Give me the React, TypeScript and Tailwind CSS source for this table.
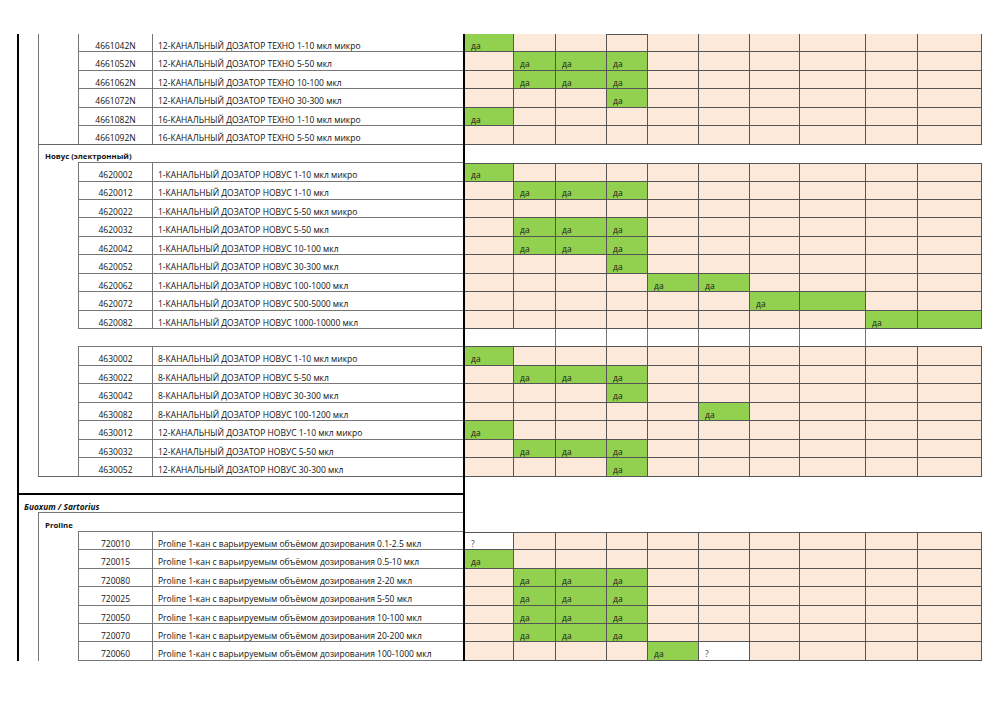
import React from "react";

type Row =
  | { t: "item"; code: string; name: string; d: string; b38?: boolean; topB?: boolean; first?: boolean }
  | { t: "head"; text: string }
  | { t: "brand"; text: string }
  | { t: "gap" }
  | { t: "sep" };

const COLW = [
  "w-[49px]",
  "w-[42px]",
  "w-[51px]",
  "w-[41px]",
  "w-[51px]",
  "w-[51px]",
  "w-[50px]",
  "w-[66px]",
  "w-[52px]",
  "w-[64px]",
];

const rows: Row[] = [
  { t: "item", code: "4661042N", name: "12-КАНАЛЬНЫЙ ДОЗАТОР ТЕХНО 1-10 мкл микро", d: "g.........", first: true },
  { t: "item", code: "4661052N", name: "12-КАНАЛЬНЫЙ ДОЗАТОР ТЕХНО 5-50 мкл", d: ".ggg......" },
  { t: "item", code: "4661062N", name: "12-КАНАЛЬНЫЙ ДОЗАТОР ТЕХНО 10-100 мкл", d: ".ggg......" },
  { t: "item", code: "4661072N", name: "12-КАНАЛЬНЫЙ ДОЗАТОР ТЕХНО 30-300 мкл", d: "...g......" },
  { t: "item", code: "4661082N", name: "16-КАНАЛЬНЫЙ ДОЗАТОР ТЕХНО 1-10 мкл микро", d: "g........." },
  { t: "item", code: "4661092N", name: "16-КАНАЛЬНЫЙ ДОЗАТОР ТЕХНО 5-50 мкл микро", d: "..........", b38: true },
  { t: "head", text: "Новус (электронный)" },
  { t: "item", code: "4620002", name: "1-КАНАЛЬНЫЙ ДОЗАТОР НОВУС 1-10 мкл микро", d: "g.........", topB: true },
  { t: "item", code: "4620012", name: "1-КАНАЛЬНЫЙ ДОЗАТОР НОВУС 1-10 мкл", d: ".ggg......" },
  { t: "item", code: "4620022", name: "1-КАНАЛЬНЫЙ ДОЗАТОР НОВУС 5-50 мкл микро", d: ".........." },
  { t: "item", code: "4620032", name: "1-КАНАЛЬНЫЙ ДОЗАТОР НОВУС 5-50 мкл", d: ".ggg......" },
  { t: "item", code: "4620042", name: "1-КАНАЛЬНЫЙ ДОЗАТОР НОВУС 10-100 мкл", d: ".ggg......" },
  { t: "item", code: "4620052", name: "1-КАНАЛЬНЫЙ ДОЗАТОР НОВУС 30-300 мкл", d: "...g......" },
  { t: "item", code: "4620062", name: "1-КАНАЛЬНЫЙ ДОЗАТОР НОВУС 100-1000 мкл", d: "....gg...." },
  { t: "item", code: "4620072", name: "1-КАНАЛЬНЫЙ ДОЗАТОР НОВУС 500-5000 мкл", d: "......gG.." },
  { t: "item", code: "4620082", name: "1-КАНАЛЬНЫЙ ДОЗАТОР НОВУС 1000-10000 мкл", d: "........gG" },
  { t: "gap" },
  { t: "item", code: "4630002", name: "8-КАНАЛЬНЫЙ ДОЗАТОР НОВУС 1-10 мкл микро", d: "g........." },
  { t: "item", code: "4630022", name: "8-КАНАЛЬНЫЙ ДОЗАТОР НОВУС 5-50 мкл", d: ".ggg......" },
  { t: "item", code: "4630042", name: "8-КАНАЛЬНЫЙ ДОЗАТОР НОВУС 30-300 мкл", d: "...g......" },
  { t: "item", code: "4630082", name: "8-КАНАЛЬНЫЙ ДОЗАТОР НОВУС 100-1200 мкл", d: ".....g...." },
  { t: "item", code: "4630012", name: "12-КАНАЛЬНЫЙ ДОЗАТОР НОВУС 1-10 мкл микро", d: "g........." },
  { t: "item", code: "4630032", name: "12-КАНАЛЬНЫЙ ДОЗАТОР НОВУС 5-50 мкл", d: ".ggg......" },
  { t: "item", code: "4630052", name: "12-КАНАЛЬНЫЙ ДОЗАТОР НОВУС 30-300 мкл", d: "...g......", b38: true },
  { t: "sep" },
  { t: "brand", text: "Биохит / Sartorius" },
  { t: "head", text: "Proline" },
  { t: "item", code: "720010", name: "Proline 1-кан с варьируемым объёмом дозирования 0.1-2.5 мкл", d: "?.........", topB: true },
  { t: "item", code: "720015", name: "Proline 1-кан с варьируемым объёмом дозирования 0.5-10 мкл", d: "g........." },
  { t: "item", code: "720080", name: "Proline 1-кан с варьируемым объёмом дозирования 2-20 мкл", d: ".ggg......" },
  { t: "item", code: "720025", name: "Proline 1-кан с варьируемым объёмом дозирования 5-50 мкл", d: ".ggg......" },
  { t: "item", code: "720050", name: "Proline 1-кан с варьируемым объёмом дозирования 10-100 мкл", d: ".ggg......" },
  { t: "item", code: "720070", name: "Proline 1-кан с варьируемым объёмом дозирования 20-200 мкл", d: ".ggg......" },
  { t: "item", code: "720060", name: "Proline 1-кан с варьируемым объёмом дозирования 100-1000 мкл", d: "....g?...." },
];

function DataCells({ d, topB, first }: { d: string; topB?: boolean; first?: boolean }) {
  return (
    <div className="flex h-full border-l-2 border-black">
      {d.split("").map((c, i) => {
        const bg =
          c === "g" || c === "G" ? "bg-[#92d050]" : c === "?" ? "bg-white" : "bg-[#fde9d9]";
        const top = topB || (first && i === 3) ? "border-t border-t-[#555]" : "";
        return (
          <div
            key={i}
            className={`${COLW[i]} ${bg} ${top} h-full border-r border-b border-[#555] flex items-end pl-[6px] pb-[1px] text-[8.5px] leading-none text-[#1a1a1a]`}
          >
            {c === "g" ? "да" : c === "?" ? <span className="text-[#444]">?</span> : null}
          </div>
        );
      })}
    </div>
  );
}

function GapCells() {
  return (
    <div className="flex h-full border-l-2 border-black">
      {COLW.map((w, i) => (
        <div
          key={i}
          className={`${w} h-full bg-white border-b border-[#555] ${i >= 1 && i <= 7 ? "border-r border-r-[#777]" : ""}`}
        />
      ))}
    </div>
  );
}

function WhiteData() {
  return <div className="h-full w-[519px] border-l-2 border-black bg-white" />;
}

function RowView({ r }: { r: Row }) {
  const rowCls = "flex h-[18.45px] w-[965px]";
  const leftCls = "flex h-full w-[446px] border-l-2 border-black";
  const txt = "text-[8.5px] leading-none text-[#111] whitespace-nowrap";

  if (r.t === "item") {
    return (
      <div className={rowCls}>
        <div className={leftCls}>
          <div className="w-[19px] h-full" />
          <div className={`flex h-full w-[425px] border-l border-[#777] ${r.b38 ? "border-b border-b-[#666]" : ""}`}>
            <div className="w-[39px] h-full" />
            <div
              className={`w-[74px] h-full border-l border-[#777] ${r.b38 ? "" : "border-b border-b-[#777]"} flex items-end justify-center pb-[1px] ${txt}`}
            >
              {r.code}
            </div>
            <div
              className={`w-[311px] h-full border-l border-[#777] ${r.b38 ? "" : "border-b border-b-[#777]"} flex items-end pl-[5px] pb-[1px] ${txt}`}
            >
              {r.name}
            </div>
          </div>
        </div>
        <DataCells d={r.d} topB={r.topB} first={r.first} />
      </div>
    );
  }
  if (r.t === "head") {
    return (
      <div className={rowCls}>
        <div className={leftCls}>
          <div className="w-[19px] h-full" />
          <div className="relative flex h-full w-[425px] border-l border-[#777]">
            <div className="w-[39px] h-full" />
            <div className="w-[385px] h-full border-b border-[#777]" />
            <div className="absolute left-[6px] bottom-[2px] font-bold text-[7.8px] leading-none text-[#111] whitespace-nowrap">
              {r.text}
            </div>
          </div>
        </div>
        <WhiteData />
      </div>
    );
  }
  if (r.t === "brand") {
    return (
      <div className={rowCls}>
        <div className={`relative ${leftCls}`}>
          <div className="w-[19px] h-full" />
          <div className="w-[425px] h-full border-b border-[#777]" />
          <div className="absolute left-[5px] bottom-[2px] font-bold italic text-[8.3px] leading-none text-[#111] whitespace-nowrap">
            {r.text}
          </div>
        </div>
        <WhiteData />
      </div>
    );
  }
  if (r.t === "gap") {
    return (
      <div className={rowCls}>
        <div className={leftCls}>
          <div className="w-[19px] h-full" />
          <div className="flex h-full w-[425px] border-l border-[#777]">
            <div className="w-[39px] h-full" />
            <div className="w-[385px] h-full border-b border-[#777]" />
          </div>
        </div>
        <GapCells />
      </div>
    );
  }
  return (
    <div className={rowCls}>
      <div className={leftCls}>
        <div className="w-[444px] h-full border-b-2 border-black" />
      </div>
      <WhiteData />
    </div>
  );
}

export default function App() {
  return (
    <div
      className="w-[1000px] h-[707px] bg-white pt-[34px] pl-[17px] overflow-hidden"
      style={{ fontFamily: '"Open Sans", "Noto Sans", sans-serif' }}
    >
      <div className="flex flex-col">
        {rows.map((r, i) => (
          <RowView key={i} r={r} />
        ))}
      </div>
    </div>
  );
}
